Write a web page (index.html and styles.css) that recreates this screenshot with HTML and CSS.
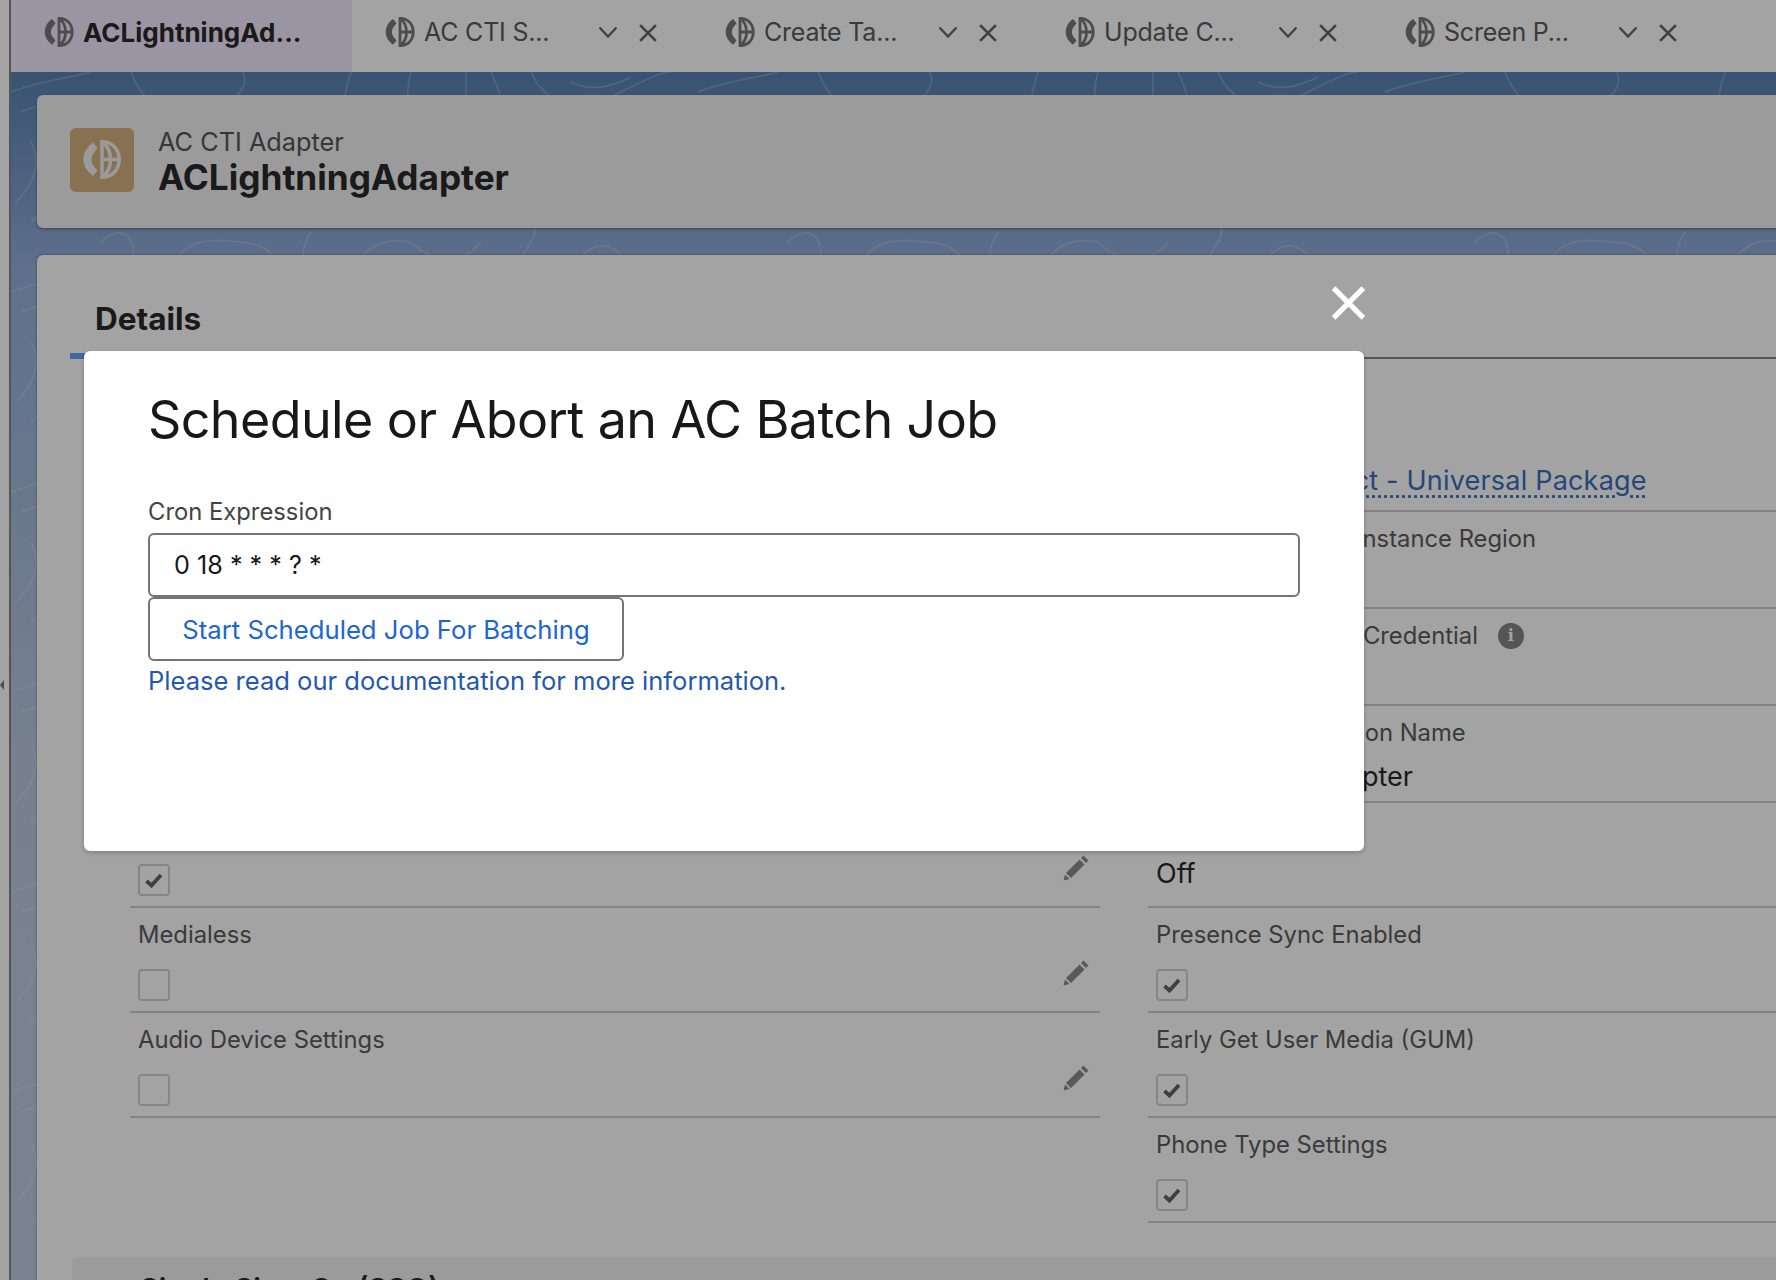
FILE: index.html
```html
<!DOCTYPE html>
<html lang="en">
<head>
  <meta charset="UTF-8">
  <title>ACLightningAdapter</title>
  <meta name="viewport" content="width=device-width, initial-scale=1">
  <link rel="stylesheet" href="styles.css">
</head>
<body>

  <svg class="defs" aria-hidden="true">
    <symbol id="adapter" viewBox="0 0 38 39">
      <path d="M10 2.500 C3.500 7 0.500 13 0.500 19.500 C0.500 25.500 3.500 31 10 36 L14.500 30.500 L11.500 27 C9.500 24.500 8.500 22 8.500 19.500 C8.500 17 9.500 14 11.500 12 L14.500 8 Z" fill="currentColor"/>
      <path d="M19 1.800 C29.500 1.800 36.200 9.500 36.200 19.500 C36.200 29.500 29.500 37.200 19 37.200 Z M19 1.800 C25 6 27.500 12 27.500 19.500 C27.500 27 25 33 19 37.200 M19 19.500 H36.200" fill="none" stroke="currentColor" stroke-width="3.600"/>
    </symbol>
    <symbol id="chevron" viewBox="0 0 20 12">
      <path d="M1.500 1.500 L10 10.500 L18.500 1.500" fill="none" stroke="currentColor" stroke-width="2.300"/>
    </symbol>
    <symbol id="close" viewBox="0 0 16 16">
      <path d="M1 1 L15 15 M15 1 L1 15" fill="none" stroke="currentColor" stroke-width="2.400"/>
    </symbol>
    <symbol id="pencil" viewBox="0 0 27 27">
      <path d="M20.500 1.500 L25.500 6.500 L23 9 L18 4 Z M16.500 5.500 L21.500 10.500 L8 24 L3 19 Z M2 20.500 L6.500 25 L0.500 26.500 Z" fill="currentColor"/>
    </symbol>
    <symbol id="check" viewBox="0 0 18 15">
      <path d="M1.500 8 L6.500 12.500 L16 2" fill="none" stroke="currentColor" stroke-width="3.800"/>
    </symbol>
  </svg>

  <div class="split-strip"><span class="split-arrow"></span></div>

  <div class="workspace">
    <div class="tabbar">
      <div class="tab active">
        <svg class="tab-icon"><use href="#adapter"/></svg>
        <span class="tab-name">ACLightningAd...</span>
      </div>
      <div class="tab">
        <svg class="tab-icon"><use href="#adapter"/></svg>
        <span class="tab-name">AC CTI S...</span>
        <svg class="tab-chevron"><use href="#chevron"/></svg>
        <svg class="tab-close"><use href="#close"/></svg>
      </div>
      <div class="tab">
        <svg class="tab-icon"><use href="#adapter"/></svg>
        <span class="tab-name">Create Ta...</span>
        <svg class="tab-chevron"><use href="#chevron"/></svg>
        <svg class="tab-close"><use href="#close"/></svg>
      </div>
      <div class="tab">
        <svg class="tab-icon"><use href="#adapter"/></svg>
        <span class="tab-name">Update C...</span>
        <svg class="tab-chevron"><use href="#chevron"/></svg>
        <svg class="tab-close"><use href="#close"/></svg>
      </div>
      <div class="tab">
        <svg class="tab-icon"><use href="#adapter"/></svg>
        <span class="tab-name">Screen P...</span>
        <svg class="tab-chevron"><use href="#chevron"/></svg>
        <svg class="tab-close"><use href="#close"/></svg>
      </div>
    </div>

    <div class="content">
      <div class="record-header">
        <div class="record-icon"><svg><use href="#adapter"/></svg></div>
        <div class="record-title">
          <div class="record-type">AC CTI Adapter</div>
          <div class="record-name">ACLightningAdapter</div>
        </div>
      </div>

      <div class="record-body">
        <div class="detail-tabs">
          <div class="detail-tab">Details</div>
        </div>

        <div class="fields">
          <div class="row"></div>
          <div class="row">
            <div class="label">Product</div>
            <div class="value value-link"><a class="record-link" href="#">Amazon Connect - Universal Package</a></div>
          </div>

          <div class="row"></div>
          <div class="row">
            <div class="label">Amazon Connect Instance Region</div>
            <div class="value"></div>
          </div>

          <div class="row"></div>
          <div class="row">
            <div class="label">AWS Connect API Credential <span class="info">i</span></div>
            <div class="value"></div>
          </div>

          <div class="row"></div>
          <div class="row">
            <div class="label">Lightning Application Name</div>
            <div class="value">ACLightningAdapter</div>
          </div>

          <div class="row check-row">
            <div class="label"></div>
            <div class="check-line">
              <span class="checkbox"><svg><use href="#check"/></svg></span>
              <svg class="pencil"><use href="#pencil"/></svg>
            </div>
          </div>
          <div class="row check-row">
            <div class="label"></div>
            <div class="value">Off</div>
          </div>

          <div class="row check-row">
            <div class="label">Medialess</div>
            <div class="check-line">
              <span class="checkbox"></span>
              <svg class="pencil"><use href="#pencil"/></svg>
            </div>
          </div>
          <div class="row check-row">
            <div class="label">Presence Sync Enabled</div>
            <div class="check-line">
              <span class="checkbox"><svg><use href="#check"/></svg></span>
            </div>
          </div>

          <div class="row check-row">
            <div class="label">Audio Device Settings</div>
            <div class="check-line">
              <span class="checkbox"></span>
              <svg class="pencil"><use href="#pencil"/></svg>
            </div>
          </div>
          <div class="row check-row">
            <div class="label">Early Get User Media (GUM)</div>
            <div class="check-line">
              <span class="checkbox"><svg><use href="#check"/></svg></span>
            </div>
          </div>

          <div class="empty-cell"></div>
          <div class="row check-row">
            <div class="label">Phone Type Settings</div>
            <div class="check-line">
              <span class="checkbox"><svg><use href="#check"/></svg></span>
            </div>
          </div>
        </div>

        <div class="section-bar">
          <span class="section-arrow"></span>
          <span class="section-title">Single Sign-On (SSO)</span>
        </div>
      </div>
    </div>
  </div>

  <!-- dimmed page + dialog -->
  <div class="backdrop"></div>
  <div class="modal">
    <svg class="modal-close"><use href="#close"/></svg>
    <h2>Schedule or Abort an AC Batch Job</h2>
    <label class="cron-label" for="cron">Cron Expression</label>
    <input id="cron" class="cron-input" type="text" value="0 18 * * * ? *">
    <button class="start-btn">Start Scheduled Job For Batching</button>
    <a class="doc-link" href="#">Please read our documentation for more information.</a>
  </div>

</body>
</html>
```

FILE: styles.css
```css
* { box-sizing: border-box; }

body {
  margin: 0;
  height: 1280px;
  overflow: hidden;
  display: flex;
  position: relative;
  font-family: Inter, "Liberation Sans", sans-serif;
  font-size: 23.800px;
  color: #5c5c5c;
  background: #fff;
}

.defs {
  width: 0;
  height: 0;
  position: absolute;
}

.split-strip {
  width: 11px;
  flex: none;
  border-right: 2px solid #858585;
  background: #fff;
  display: flex;
  align-items: center;
  padding-top: 90px;
  height: 1280px;
}

.split-arrow {
  border-right: 4px solid #777;
  border-top: 5px solid transparent;
  border-bottom: 5px solid transparent;
}

.workspace {
  flex: 1;
  min-width: 0;
  display: flex;
  flex-direction: column;
}

/* tabs */
.tabbar {
  display: flex;
  height: 72px;
  flex: none;
  background: #fff;
}

.tab {
  width: 340px;
  flex: none;
  display: flex;
  align-items: center;
  padding: 0 0 8px 33px;
  color: #5c5c5c;
  position: relative;
  font-size: 25px;
}

.tab:first-child { width: 341px; }

.tab.active {
  background: #f3e9ff;
  color: #2a2a2a;
  font-size: 26px;
  font-weight: 700;
}

.tab-icon {
  width: 30px;
  height: 30px;
  margin-right: 9px;
  flex: none;
  color: #777;
}

.tab-name {
  white-space: nowrap;
  letter-spacing: -0.2px;
}

.tab.active .tab-name { letter-spacing: 0; }

.tab-chevron {
  width: 20px;
  height: 12px;
  color: #666;
  position: absolute;
  left: 246px;
  top: 26px;
}

.tab-close {
  width: 18px;
  height: 18px;
  color: #666;
  position: absolute;
  left: 287px;
  top: 24px;
}

/* blue area */
.content {
  flex: 1;
  padding: 23px 0 0 26px;
  background:
    url("data:image/svg+xml,%3Csvg xmlns='http://www.w3.org/2000/svg' width='687' height='200' fill='none' stroke='white' stroke-opacity='.22' stroke-width='1.500'%3E%3Cpath d='M0 20C30 8 60 6 80 0M10 40C50 25 80 20 110 35M120 0C130 25 145 45 190 40C215 36 240 20 232 0M340 0C330 30 330 50 350 60M400 0C392 25 400 55 415 60M455 0V45M480 0C490 20 495 40 490 60M520 0C535 35 570 40 610 20C640 5 650 0 660 0M560 10C580 20 600 15 620 5M90 170C110 150 130 165 120 195M160 200C170 170 190 165 230 170C260 172 270 190 265 200M300 160C290 175 290 190 295 200M340 200C355 175 370 165 400 170C420 190 450 195 470 170M500 200C520 170 530 160 520 150M560 200C580 165 600 165 625 200M5 130C25 110 30 90 20 70M20 150C40 135 50 110 40 85'/%3E%3C/svg%3E") 0 0 repeat,
    linear-gradient(to bottom, #5a82b2 0, #94b0dc 200px, #bbcadf 700px, #c0cde0 100%);
  min-width: 0;
}

.record-header {
  height: 133px;
  margin-right: -30px;
  background: #f3f3f3;
  border-radius: 6px;
  box-shadow: 0 1px 3px rgba(0, 0, 0, 0.35);
  display: flex;
  align-items: center;
  padding: 0 0 4px 33px;
  gap: 24px;
}

.record-title { margin-top: 2px; }

.record-icon {
  width: 64px;
  height: 64px;
  border-radius: 6px;
  background: #d3b17d;
  display: flex;
  align-items: center;
  justify-content: center;
  color: #f1f1f1;
}

.record-icon svg {
  width: 38px;
  height: 39px;
}

.record-type {
  font-size: 25.300px;
  line-height: 32px;
  color: #555;
}

.record-name {
  font-size: 35.200px;
  line-height: 38px;
  font-weight: 700;
  color: #2a2a2a;
}

/* details card */
.record-body {
  margin-top: 27px;
  margin-right: -30px;
  height: 1100px;
  background: #fff;
  border-radius: 6px 6px 0 0;
  box-shadow: 0 0 3px rgba(0, 0, 0, 0.35);
  padding-left: 33px;
}

.detail-tabs {
  height: 104px;
  border-bottom: 2px solid #858585;
  display: flex;
  align-items: flex-end;
}

.detail-tab {
  height: 73px;
  width: 220px;
  margin-bottom: -2px;
  padding: 0 25px;
  border-bottom: 6px solid #62a2ff;
  font-size: 31.500px;
  line-height: 65px;
  font-weight: 700;
  color: #2a2a2a;
}

.fields {
  margin: 56px 0 0 60px;
  display: grid;
  grid-template-columns: 970px 700px;
  column-gap: 48px;
}

.row {
  border-bottom: 2px solid #cdcdcd;
  padding: 12px 11px 8px 8px;
}

.label {
  height: 30px;
  line-height: 30px;
  white-space: nowrap;
  display: flex;
  align-items: center;
  gap: 7px;
}

.value {
  margin-top: 13px;
  height: 32px;
  line-height: 32px;
  font-size: 27px;
  color: #2a2a2a;
}

.value-link { margin: 8px 0 5px; }

.check-row { padding-bottom: 10px; }

.check-line {
  margin-top: 19px;
  height: 32px;
  display: flex;
  justify-content: space-between;
  align-items: flex-start;
}

.checkbox {
  width: 32px;
  height: 32px;
  border: 2px solid #d2d2d2;
  border-radius: 4px;
  display: flex;
  align-items: center;
  justify-content: center;
  color: #636363;
}

.checkbox svg {
  width: 18px;
  height: 15px;
}

.pencil {
  width: 27px;
  height: 27px;
  margin: -10px -1px 0 0;
  color: #8c8c8c;
}

.record-link {
  color: #3870bf;
  letter-spacing: 0.2px;
  text-decoration: underline dotted;
  text-underline-offset: 5px;
}

.info {
  width: 26px;
  height: 26px;
  margin-left: 13px;
  border-radius: 50%;
  background: #858585;
  color: #fff;
  font-family: "DejaVu Serif", serif;
  font-size: 16px;
  font-weight: 700;
  line-height: 26px;
  text-align: center;
}

.section-bar {
  margin: 34px 0 0 2px;
  height: 62px;
  background: #f3f3f3;
  border-radius: 6px 6px 0 0;
  display: flex;
  align-items: center;
  padding-left: 20px;
  color: #2a2a2a;
}

.section-arrow {
  border-bottom: 11px solid #777;
  border-left: 8px solid transparent;
  border-right: 8px solid transparent;
  margin: 0 32px 6px 0;
}

.section-title {
  font-size: 29px;
  font-weight: 600;
}

/* dialog */
.backdrop {
  position: absolute;
  inset: 0;
  background: rgba(0, 0, 0, 0.36);
}

.modal {
  position: absolute;
  left: 84px;
  top: 351px;
  width: 1280px;
  height: 500px;
  padding: 39px 64px 0 64px;
  background: #fff;
  border-radius: 6px;
  box-shadow: 0 2px 4px rgba(0, 0, 0, 0.2);
  display: flex;
  flex-direction: column;
  align-items: flex-start;
}

.modal-close {
  position: absolute;
  right: -2px;
  top: -65px;
  width: 35px;
  height: 34px;
  color: #fff;
}

.modal h2 {
  margin: 0 0 47px;
  font-size: 52px;
  line-height: 60px;
  font-weight: 400;
  color: #181818;
  letter-spacing: -0.6px;
}

.cron-label {
  line-height: 30px;
  color: #444;
  margin-bottom: 6px;
}

.cron-input {
  width: 100%;
  height: 64px;
  padding: 0 24px;
  border: 2px solid #747474;
  border-radius: 6px;
  font-family: inherit;
  font-size: 25.200px;
  color: #181818;
  background: #fff;
  outline: none;
}

.start-btn {
  width: 476px;
  height: 64px;
  border: 2px solid #747474;
  border-radius: 6px;
  background: #fff;
  font-family: inherit;
  font-size: 25.700px;
  color: #1b66d0;
}

.doc-link {
  margin-top: 5px;
  line-height: 30px;
  font-size: 25.550px;
  color: #2458ae;
  text-decoration: none;
}
```
